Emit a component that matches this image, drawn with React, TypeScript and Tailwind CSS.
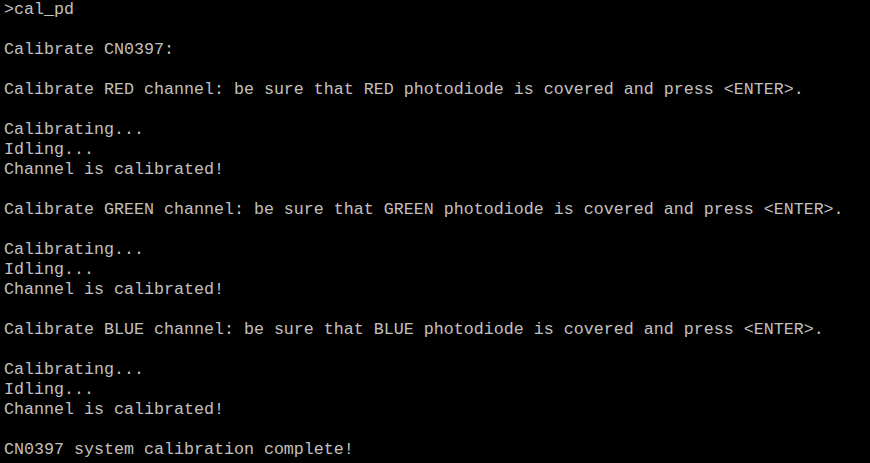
const lines = [
  ">cal_pd",
  "",
  "Calibrate CN0397:",
  "",
  "Calibrate RED channel: be sure that RED photodiode is covered and press <ENTER>.",
  "",
  "Calibrating...",
  "Idling...",
  "Channel is calibrated!",
  "",
  "Calibrate GREEN channel: be sure that GREEN photodiode is covered and press <ENTER>.",
  "",
  "Calibrating...",
  "Idling...",
  "Channel is calibrated!",
  "",
  "Calibrate BLUE channel: be sure that BLUE photodiode is covered and press <ENTER>.",
  "",
  "Calibrating...",
  "Idling...",
  "Channel is calibrated!",
  "",
  "CN0397 system calibration complete!",
];

export default function App() {
  return (
    <div className="w-[870px] h-[463px] bg-black overflow-hidden pl-[4px] pt-0 text-[#c0c0c0] font-['Liberation_Mono','Courier_New',monospace] text-[16.667px] leading-[20px]">
      {lines.map((l, i) => (
        <div key={i} className="h-[20px] whitespace-pre">
          {l}
        </div>
      ))}
    </div>
  );
}
